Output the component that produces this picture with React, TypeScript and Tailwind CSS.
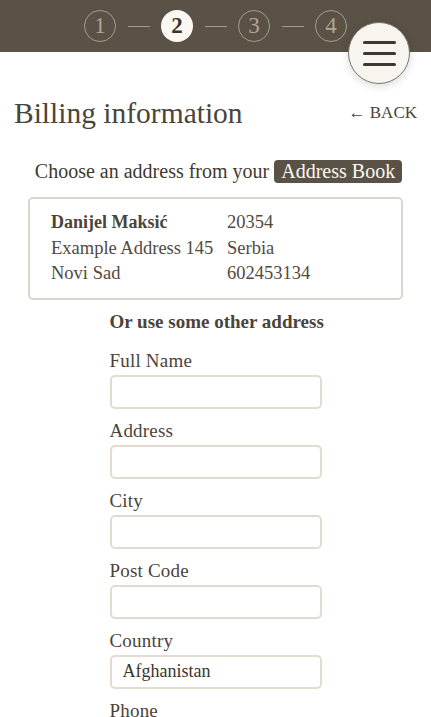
import React from "react";

const serif = { fontFamily: '"Liberation Serif", "DejaVu Serif", serif' };

function Steps() {
  const steps = [1, 2, 3, 4];
  return (
    <div className="flex items-center justify-center gap-[11.5px]">
      {steps.map((n, i) => (
        <React.Fragment key={n}>
          {i > 0 && <div className="w-[22px] h-px bg-[#a99b87]" />}
          {n === 2 ? (
            <div className="w-[32px] h-[32px] rounded-full bg-[#fbf8f3] flex items-center justify-center text-[23px] font-bold text-[#3b352d]">
              {n}
            </div>
          ) : (
            <div className="w-[32px] h-[32px] rounded-full border border-[#a99b87] flex items-center justify-center text-[23px] text-[#b3a58f]">
              {n}
            </div>
          )}
        </React.Fragment>
      ))}
    </div>
  );
}

function Field({ label, value }: { label: string; value?: string }) {
  return (
    <div className="flex flex-col">
      <label className="text-[19px] leading-[20px] text-[#4b443a] tracking-[0.2px]">{label}</label>
      <div className="mt-[4px] h-[34px] rounded-[5px] border-2 border-[#e3dbcf] bg-white flex items-center px-[11px] text-[18px] text-[#3b352d]">
        {value}
      </div>
    </div>
  );
}

export default function App() {
  return (
    <div className="relative min-h-screen bg-white text-[#4b443a]" style={serif}>
      <header className="h-[52px] bg-[#5a5247] flex items-center justify-center">
        <Steps />
      </header>
      <button className="absolute left-[348px] top-[22px] w-[62px] h-[62px] rounded-full bg-[#f8f5f0] border border-[#7d756b] shadow-[0_2px_8px_rgba(0,0,0,0.15)] flex flex-col items-center justify-center gap-[8px]">
        <span className="block w-[33px] h-[3px] rounded-full bg-[#3d3830]" />
        <span className="block w-[33px] h-[3px] rounded-full bg-[#3d3830]" />
        <span className="block w-[33px] h-[3px] rounded-full bg-[#3d3830]" />
      </button>

      <div className="flex items-end justify-between pl-[14px] pr-[14px] pt-[44px]">
        <h1 className="text-[29.5px] leading-[34px] text-[#4b443a]">Billing information</h1>
        <span className="text-[17px] leading-[22px] mb-[6px] text-[#4b443a]">← BACK</span>
      </div>

      <div className="flex items-center justify-center gap-[5px] mt-[26px] pl-[6px] text-[20px] text-[#3f3930]">
        <span>Choose an address from your</span>
        <span className="bg-[#5a5247] text-[#fbf8f3] rounded-[4px] px-[7px] leading-[23px]">Address Book</span>
      </div>

      <div className="mx-[28px] mt-[11px] border-2 border-[#dcd5cb] rounded-[5px] px-[21px] py-[11px] grid grid-cols-[176px_1fr] text-[18.5px] leading-[25.5px] text-[#524a3f]">
        <span className="font-bold text-[18px] text-[#4b443a]">Danijel Maksić</span>
        <span>20354</span>
        <span>Example Address 145</span>
        <span>Serbia</span>
        <span>Novi Sad</span>
        <span>602453134</span>
      </div>

      <div className="w-[212px] mx-auto mt-[11px]">
        <h2 className="text-center text-[19px] font-bold text-[#4b443a] leading-[22px] whitespace-nowrap">Or use some other address</h2>
        <div className="mt-[18px] flex flex-col gap-[12px]">
          <Field label="Full Name" />
          <Field label="Address" />
          <Field label="City" />
          <Field label="Post Code" />
          <Field label="Country" value="Afghanistan" />
          <Field label="Phone" />
        </div>
      </div>
    </div>
  );
}
